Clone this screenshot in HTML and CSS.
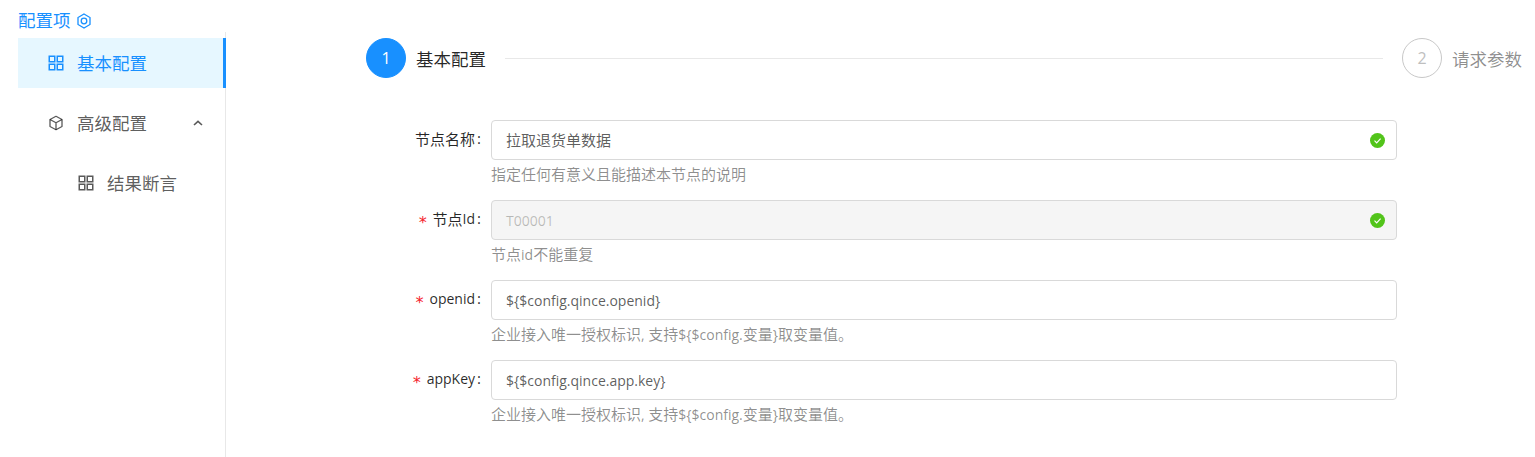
FILE: index.html
```html
<!DOCTYPE html>
<html lang="zh-CN">
<head>
<meta charset="utf-8">
<title>配置项</title>
<link rel="stylesheet" href="styles.css">
</head>
<body>
<div class="page">
  <aside class="side">
    <div class="side-title">配置项
      <svg class="title-icon" viewBox="0 0 16 16" width="16" height="16"><path d="M8 1l6 3.500v7L8 15l-6-3.500v-7z" fill="none" stroke="#1890ff" stroke-width="1.300"/><circle cx="8" cy="8" r="2.800" fill="none" stroke="#1890ff" stroke-width="1.300"/></svg>
    </div>
    <nav class="menu">
      <div class="menu-item active">
        <svg class="mi" viewBox="0 0 16 16" width="16" height="16"><g fill="none" stroke="currentColor" stroke-width="1.500"><rect x="1.250" y="1.250" width="5.500" height="5.500"/><rect x="9.250" y="1.250" width="5.500" height="5.500"/><rect x="1.250" y="9.250" width="5.500" height="5.500"/><rect x="9.250" y="9.250" width="5.500" height="5.500"/></g></svg>
        <span>基本配置</span>
      </div>
      <div class="menu-item">
        <svg class="mi" viewBox="0 0 16 16" width="16" height="16"><g fill="none" stroke="currentColor" stroke-width="1.300" stroke-linejoin="round"><path d="M8 1.300l6 3.200v7L8 14.700l-6-3.200v-7z"/><path d="M2 4.500l6 3.300 6-3.300M8 7.800v6.900"/></g></svg>
        <span>高级配置</span>
        <svg class="chev" viewBox="0 0 10 6" width="10" height="6"><path d="M1 5l4-3.700L9 5" fill="none" stroke="currentColor" stroke-width="1.600"/></svg>
      </div>
      <div class="menu-item sub">
        <svg class="mi" viewBox="0 0 16 16" width="16" height="16"><g fill="none" stroke="currentColor" stroke-width="1.500"><rect x="1.250" y="1.250" width="5.500" height="5.500"/><rect x="9.250" y="1.250" width="5.500" height="5.500"/><rect x="1.250" y="9.250" width="5.500" height="5.500"/><rect x="9.250" y="9.250" width="5.500" height="5.500"/></g></svg>
        <span>结果断言</span>
      </div>
    </nav>
  </aside>
  <main class="main">
    <div class="steps">
      <div class="step-circle current">1</div>
      <div class="step-title">基本配置</div>
      <div class="step-line"></div>
      <div class="step-circle">2</div>
      <div class="step-title todo">请求参数</div>
    </div>
    <form class="form">
      <div class="row">
        <label class="label">节点名称</label>
        <div class="field">
          <div class="input">拉取退货单数据<svg class="ok" viewBox="0 0 16 16" width="15" height="15"><circle cx="8" cy="8" r="8" fill="#52c41a"/><path d="M4.800 8.200l2.300 2.300 4.200-4.500" fill="none" stroke="#fff" stroke-width="1.300"/></svg></div>
          <div class="help">指定任何有意义且能描述本节点的说明</div>
        </div>
      </div>
      <div class="row">
        <label class="label"><i class="req">*</i>节点<span class="lat">Id</span></label>
        <div class="field">
          <div class="input disabled"><span class="lat">T00001</span><svg class="ok" viewBox="0 0 16 16" width="15" height="15"><circle cx="8" cy="8" r="8" fill="#52c41a"/><path d="M4.800 8.200l2.300 2.300 4.200-4.500" fill="none" stroke="#fff" stroke-width="1.300"/></svg></div>
          <div class="help">节点<span class="lat">id</span>不能重复</div>
        </div>
      </div>
      <div class="row">
        <label class="label"><i class="req">*</i><span class="lat">openid</span></label>
        <div class="field">
          <div class="input"><span class="lat">${$config.qince.openid}</span></div>
          <div class="help">企业接入唯一授权标识<span class="lat">, </span>支持<span class="lat">${$config.</span>变量<span class="lat">}</span>取变量值。</div>
        </div>
      </div>
      <div class="row">
        <label class="label"><i class="req">*</i><span class="lat">appKey</span></label>
        <div class="field">
          <div class="input"><span class="lat">${$config.qince.app.key}</span></div>
          <div class="help">企业接入唯一授权标识<span class="lat">, </span>支持<span class="lat">${$config.</span>变量<span class="lat">}</span>取变量值。</div>
        </div>
      </div>
    </form>
  </main>
</div>
</body>
</html>
```
FILE: styles.css
```css
* { box-sizing: border-box; }
html, body { margin: 0; height: 100%; overflow: hidden; background: #fff; }
body {
  font-family: "Open Sans", "Noto Sans CJK SC", sans-serif;
  font-size: 15px;
  color: rgba(0,0,0,.85);
}
.lat { font-size: 14px; }
.page { display: flex; height: 457px; }
.side { width: 226px; padding: 8px 0 0 18px; flex: none; display: flex; flex-direction: column; }
.side-title { display: flex; align-items: center; gap: 5px; height: 24px; color: #1890ff; font-size: 17.5px; line-height: 24px; }
.title-icon { flex: none; margin-top: 2px; }
.menu { flex: 1; border-right: 1px solid #e8e8e8; padding-top: 6px; }
.menu-item { position: relative; display: flex; align-items: center; height: 50px; margin-bottom: 10px; padding-left: 30px; font-size: 17.5px; color: rgba(0,0,0,.65); }
.menu-item span { margin-left: 13px; padding-bottom: 2px; }
.menu-item.active { background: #e6f7ff; color: #1890ff; margin-right: -1px; border-right: 3px solid #1890ff; }
.menu-item.sub { padding-left: 60px; }
.chev { position: absolute; left: 175px; top: 22px; }
.main { flex: 1; padding: 38px 13px 0 140px; }
.steps { display: flex; align-items: center; height: 40px; }
.step-circle { width: 40px; height: 40px; border-radius: 50%; border: 1px solid #c8c8c8; color: #bfbfbf; font-size: 16px; display: flex; align-items: center; justify-content: center; flex: none; }
.step-circle.current { background: #1890ff; border-color: #1890ff; color: #fff; }
.step-title { margin-left: 10px; font-size: 17.5px; flex: none; }
.step-title.todo { color: rgba(0,0,0,.45); }
.step-line { flex: 1; height: 1px; background: #e8e8e8; margin: 0 19px; }
.form { margin-top: 42px; }
.row { display: flex; height: 80px; }
.label { width: 116px; height: 40px; padding-bottom: 4px; flex: none; display: flex; align-items: center; justify-content: flex-end; color: rgba(0,0,0,.85); }
.label::after { content: ":"; margin-left: 2px; margin-right: 1px; }
.req { color: #f5222d; font-style: normal; font-family: "DejaVu Sans Mono", monospace; margin-right: 5px; margin-top: 8px; font-size: 16px; }
.field { width: 906px; margin-left: 9px; flex: none; }
.input { position: relative; height: 40px; border: 1px solid #d9d9d9; border-radius: 4px; padding: 0 14px; line-height: 38px; color: rgba(0,0,0,.65); }
.input.disabled { background: #f5f5f5; color: rgba(0,0,0,.25); }
.ok { position: absolute; right: 11px; top: 12px; }
.help { line-height: 22px; margin-top: 3px; color: rgba(0,0,0,.45); }
```
